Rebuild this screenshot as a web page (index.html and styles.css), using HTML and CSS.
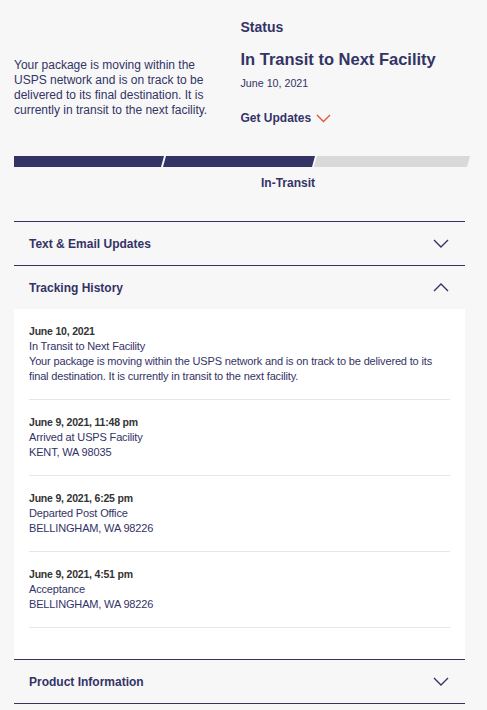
FILE: index.html
```html
<!DOCTYPE html>
<html lang="en">
<head>
<meta charset="utf-8">
<title>Tracking</title>
<link rel="stylesheet" href="styles.css">
</head>
<body>
<main class="page">
  <section class="summary">
    <p class="summary-text">Your package is moving within the USPS network and is on track to be delivered to its final destination. It is currently in transit to the next facility.</p>
    <div class="status">
      <div class="status-label">Status</div>
      <h1 class="status-title">In Transit to Next Facility</h1>
      <div class="status-date">June 10, 2021</div>
      <div class="get-updates">Get Updates
        <svg class="chev-red" width="15" height="9" viewBox="0 0 15 9"><polyline points="1,1 7.5,7.5 14,1" fill="none" stroke="#e0573a" stroke-width="1.4"/></svg>
      </div>
    </div>
  </section>

  <div class="progress">
    <div class="seg seg-1 done"></div>
    <div class="seg seg-2 done"></div>
    <div class="seg seg-3"></div>
  </div>
  <div class="progress-labels">
    <span></span>
    <span class="progress-label">In-Transit</span>
    <span></span>
  </div>

  <section class="accordion">
    <div class="acc-item">
      <div class="acc-head">
        <span class="acc-title">Text &amp; Email Updates</span>
        <svg class="chev" width="16" height="9" viewBox="0 0 16 9"><polyline points="1,1 8,8 15,1" fill="none" stroke="#333366" stroke-width="1.4"/></svg>
      </div>
    </div>
    <div class="acc-item">
      <div class="acc-head">
        <span class="acc-title">Tracking History</span>
        <svg class="chev" width="16" height="9" viewBox="0 0 16 9"><polyline points="1,8 8,1 15,8" fill="none" stroke="#333366" stroke-width="1.4"/></svg>
      </div>
      <div class="acc-body">
        <div class="event">
          <div class="event-date">June 10, 2021</div>
          <div class="event-line">In Transit to Next Facility</div>
          <div class="event-line">Your package is moving within the USPS network and is on track to be delivered to its final destination. It is currently in transit to the next facility.</div>
        </div>
        <div class="event">
          <div class="event-date">June 9, 2021, 11:48 pm</div>
          <div class="event-line">Arrived at USPS Facility</div>
          <div class="event-line">KENT, WA 98035</div>
        </div>
        <div class="event">
          <div class="event-date">June 9, 2021, 6:25 pm</div>
          <div class="event-line">Departed Post Office</div>
          <div class="event-line">BELLINGHAM, WA 98226</div>
        </div>
        <div class="event">
          <div class="event-date">June 9, 2021, 4:51 pm</div>
          <div class="event-line">Acceptance</div>
          <div class="event-line">BELLINGHAM, WA 98226</div>
        </div>
      </div>
    </div>
    <div class="acc-item">
      <div class="acc-head">
        <span class="acc-title">Product Information</span>
        <svg class="chev" width="16" height="9" viewBox="0 0 16 9"><polyline points="1,1 8,8 15,1" fill="none" stroke="#333366" stroke-width="1.4"/></svg>
      </div>
    </div>
  </section>
</main>
</body>
</html>
```

FILE: styles.css
```css
html, body {
  margin: 0;
  padding: 0;
  background: #f7f7f7;
}
body {
  font-family: "Liberation Sans", Arial, sans-serif;
  color: #333366;
}
.page {
  padding: 0 22px 0 14px;
}
.summary {
  display: grid;
  grid-template-columns: 1fr 1fr;
  padding-top: 19px;
}
.summary-text {
  margin: 39px 0 0 0;
  padding-right: 12px;
  font-size: 12px;
  line-height: 15px;
}
.status {
  display: flex;
  flex-direction: column;
  padding-left: 1px;
}
.status-label {
  font-size: 14px;
  line-height: 16px;
  font-weight: 700;
}
.status-title {
  margin: 14px 0 0 0;
  font-size: 16.5px;
  line-height: 20px;
  font-weight: 700;
}
.status-date {
  margin-top: 8px;
  font-size: 10.7px;
  line-height: 13px;
}
.get-updates {
  margin-top: 21px;
  font-size: 12px;
  line-height: 15px;
  font-weight: 700;
  display: flex;
  align-items: center;
  gap: 5px;
}
.chev-red {
  display: block;
}
.progress {
  display: flex;
  margin-top: 30px;
  margin-right: -5px;
  height: 11px;
}
.seg {
  height: 11px;
  background: #d9d9d9;
}
.seg.done {
  background: #333366;
}
.seg-1 {
  width: 150px;
  clip-path: polygon(0 0, 100% 0, calc(100% - 3px) 100%, 0 100%);
}
.seg-2 {
  width: 152px;
  margin-left: -1px;
  clip-path: polygon(3px 0, 100% 0, calc(100% - 3px) 100%, 0 100%);
}
.seg-3 {
  flex: 1;
  margin-left: -1px;
  clip-path: polygon(3px 0, 100% 0, calc(100% - 3px) 100%, 0 100%);
}
.progress-labels {
  display: grid;
  grid-template-columns: 150px 151px 1fr;
  margin-top: 9px;
}
.progress-label {
  text-align: right;
  font-size: 12px;
  line-height: 15px;
  font-weight: 700;
}
.accordion {
  margin-top: 30px;
  border-bottom: 1px solid #333366;
}
.acc-item {
  border-top: 1px solid #333366;
}
.acc-head {
  height: 43px;
  display: flex;
  align-items: center;
  justify-content: space-between;
  padding: 0 16px 0 15px;
}
.acc-title {
  font-size: 12px;
  font-weight: 700;
}
.chev {
  display: block;
}
.acc-body {
  background: #ffffff;
  padding: 0 15px 31px 15px;
}
.event {
  padding: 15px 0;
  border-bottom: 1px solid #e6e6e6;
  font-size: 11px;
  line-height: 15px;
  letter-spacing: -0.16px;
}
.event-date {
  font-weight: 700;
  font-size: 10.5px;
  letter-spacing: -0.2px;
  color: #333333;
}
```
